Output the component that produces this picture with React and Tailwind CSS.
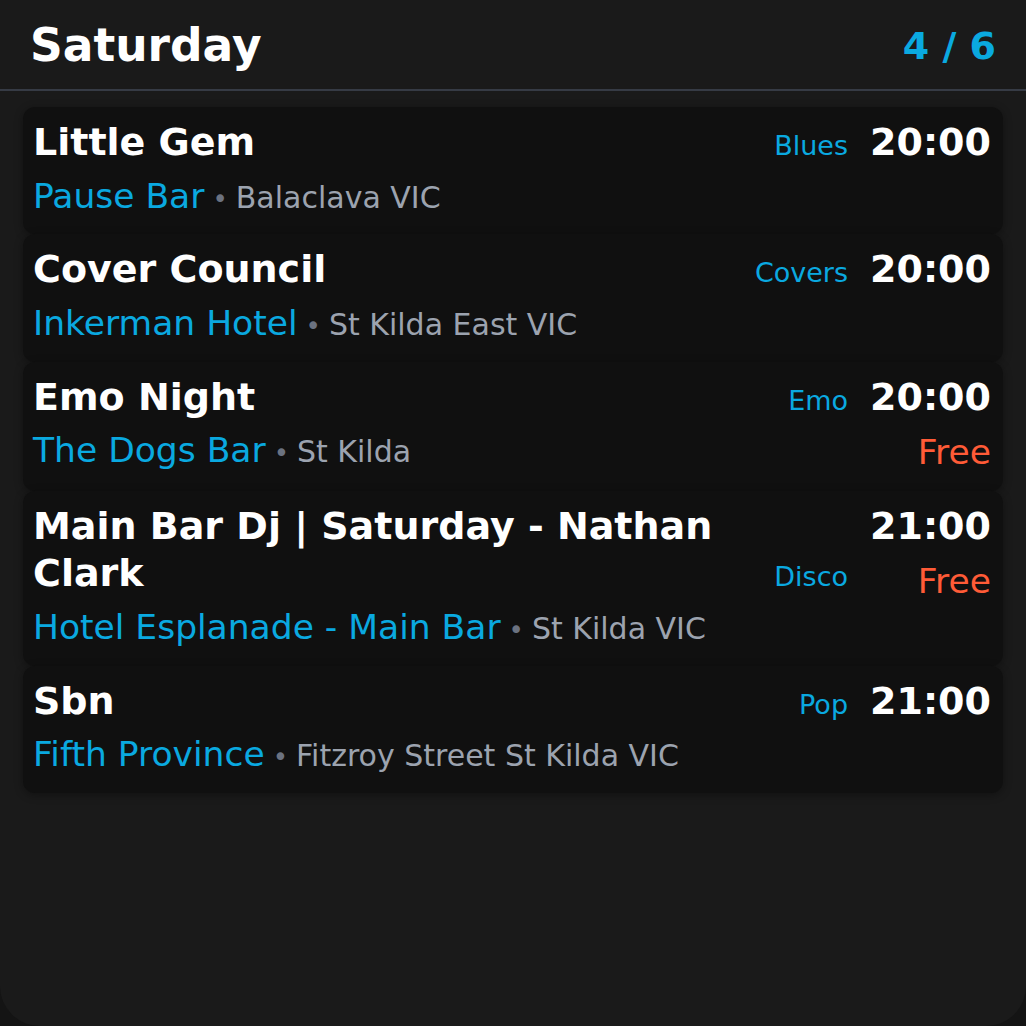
const events = [
  { title: "Little Gem", venue: "Pause Bar", place: "Balaclava VIC", genre: "Blues", time: "20:00" },
  { title: "Cover Council", venue: "Inkerman Hotel", place: "St Kilda East VIC", genre: "Covers", time: "20:00" },
  { title: "Emo Night", venue: "The Dogs Bar", place: "St Kilda", genre: "Emo", time: "20:00", free: true },
  { title: "Main Bar Dj | Saturday - Nathan Clark", venue: "Hotel Esplanade - Main Bar", place: "St Kilda VIC", genre: "Disco", time: "21:00", free: true },
  { title: "Sbn", venue: "Fifth Province", place: "Fitzroy Street St Kilda VIC", genre: "Pop", time: "21:00" },
];

function EventCard({ ev }) {
  return (
    <div className="flex rounded-xl bg-[#101010] pl-[10px] pr-3 py-3 shadow-[0_2px_8px_rgba(0,0,0,0.35)]">
      <div className="flex-1 min-w-0 flex flex-col">
        <div className="flex items-end justify-between gap-6">
          <h3 className="text-[38px] leading-[1.25] font-bold text-white">{ev.title}</h3>
          <span className="shrink-0 text-[27px] leading-[1.5] text-[#0aa9e0]">{ev.genre}</span>
        </div>
        <div className="mt-1 text-[34.5px] leading-[1.5] whitespace-nowrap">
          <span className="text-[#0aa9e0]">{ev.venue}</span>
          <span className="text-[#6b7280] text-[26px] mx-2">•</span>
          <span className="text-[30px] text-[#9ca3af]">{ev.place}</span>
        </div>
      </div>
      <div className="ml-[22px] flex flex-col items-end shrink-0">
        <span className="text-[38px] leading-[1.25] font-bold text-white">{ev.time}</span>
        {ev.free && <span className="mt-[6px] text-[34.5px] leading-[1.5] text-[#ff5b37]">Free</span>}
      </div>
    </div>
  );
}

export default function App() {
  return (
    <div className="min-h-screen bg-[#141414]" style={{ fontFamily: '"DejaVu Sans", sans-serif' }}>
      <div className="h-[1026px] rounded-b-[40px] bg-[#1a1a1a] flex flex-col">
        <header className="h-[91px] shrink-0 flex items-center justify-between pt-[3px] pl-[30px] pr-[30px] border-b-2 border-[#363b45]">
          <h1 className="text-[45.5px] font-bold text-white">Saturday</h1>
          <span className="text-[38px] font-bold text-[#0aa9e0]">4 / 6</span>
        </header>
        <div className="flex flex-col px-[23px] pt-4">
          {events.map((ev, i) => (
            <EventCard key={i} ev={ev} />
          ))}
        </div>
      </div>
    </div>
  );
}
